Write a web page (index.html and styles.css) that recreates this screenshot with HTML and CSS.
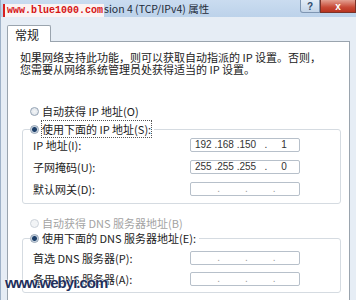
FILE: index.html
```html
<!DOCTYPE html>
<html lang="zh-CN">
<head>
    <meta charset="UTF-8">
    <title>Internet Protocol Version 4 (TCP/IPv4) 属性</title>
    <link rel="stylesheet" href="styles.css">
</head>
<body>

<div class="window">
    <div class="titlebar">
        <span class="title"><span class="mark">www.blue1000.com</span>sion 4 (TCP/IPv4) 属性</span>
        <div class="caption-btns">
            <span class="btn help">?</span>
            <span class="btn close">x</span>
        </div>
    </div>

    <div class="client">
        <div class="tabs"><span class="tab">常规</span></div>

        <div class="panel">
            <p class="intro">如果网络支持此功能，则可以获取自动指派的 IP 设置。否则，<br>您需要从网络系统管理员处获得适当的 IP 设置。</p>

            <div class="opt"><span class="radio"></span>自动获得 IP 地址(O)</div>

            <fieldset class="group ip">
                <legend class="opt"><span class="radio on"></span><span class="focus">使用下面的 IP 地址(S):</span></legend>
                <div class="row"><span class="lbl">IP 地址(I):</span><span class="ipbox">192 .168 .150   .     1</span></div>
                <div class="row"><span class="lbl">子网掩码(U):</span><span class="ipbox">255 .255 .255   .     0</span></div>
                <div class="row"><span class="lbl">默认网关(D):</span><span class="ipbox empty">        .         .         .</span></div>
            </fieldset>

            <div class="opt off"><span class="radio"></span>自动获得 DNS 服务器地址(B)</div>

            <fieldset class="group dns">
                <legend class="opt"><span class="radio on"></span>使用下面的 DNS 服务器地址(E):</legend>
                <div class="row"><span class="lbl">首选 DNS 服务器(P):</span><span class="ipbox empty">        .         .         .</span></div>
                <div class="row"><span class="lbl">备用 DNS 服务器(A):</span><span class="ipbox empty">        .         .         .</span></div>
            </fieldset>
        </div>
    </div>

    <!-- watermark stamped over the screenshot -->
    <div class="stamp">www.webyi.com</div>
</div>

</body>
</html>
```

FILE: styles.css
```css
body {
    margin: 0;
    padding: 0;
    font-family: "Noto Sans CJK SC", "Noto Sans", sans-serif;
    font-size: 11px;
    color: #222;
    background-color: #e6edf5;
}

.window {
    position: relative;
    width: 356px;
    height: 300px;
    overflow: hidden;
    border-left: 1px solid #9fb2c8;
    box-sizing: border-box;
}

.titlebar {
    display: flex;
    align-items: flex-start;
    height: 17px;
    background: linear-gradient(#cadcf0, #bcd2ea);
}

.title {
    margin-top: 2px;
    font-size: 10.5px;
    line-height: 13px;
    color: #1e2b3a;
}

.mark {
    display: inline-block;
    margin-left: 2px;
    padding: 0 1px 0 2px;
    background-color: #fbf3f3;
    border-left: 2px solid #d62020;
    color: #d61414;
    font-family: "Liberation Mono", monospace;
    font-size: 10px;
    font-weight: bold;
}

.caption-btns {
    display: flex;
    margin-left: auto;
}

.btn {
    display: flex;
    align-items: center;
    justify-content: center;
    height: 13px;
    font-family: "Liberation Sans", sans-serif;
    font-weight: bold;
    font-size: 10px;
    box-sizing: border-box;
}

.help {
    width: 20px;
    background: linear-gradient(#e4edf7, #c3d4e7);
    border: 1px solid #7f96b2;
    border-top: none;
    border-radius: 0 0 0 3px;
    color: #2f4a6b;
}

.close {
    width: 36px;
    background: linear-gradient(#e3a091, #c84a36 60%, #b8331f);
    border: 1px solid #7b3328;
    border-top: none;
    color: #fff;
}

.client {
    padding: 8px 6px 0 6px;
}

.tabs {
    display: flex;
    margin-bottom: -1px;
}

.tab {
    position: relative;
    width: 44px;
    height: 17px;
    padding-left: 7px;
    line-height: 17px;
    font-size: 12px;
    background-color: #fff;
    border: 1px solid #9aa4ae;
    border-bottom: none;
    border-radius: 2px 2px 0 0;
    box-sizing: border-box;
    z-index: 1;
}

.panel {
    height: 270px;
    padding-top: 9px;
    background-color: #fff;
    border: 1px solid #9aa4ae;
    box-sizing: border-box;
}

.intro {
    margin: 0 0 29px 12px;
    line-height: 12px;
    white-space: nowrap;
}

.opt {
    display: flex;
    align-items: center;
    height: 14px;
    margin-left: 22px;
    white-space: nowrap;
}

.radio {
    width: 9px;
    height: 9px;
    margin-right: 3px;
    border: 1px solid #94a3b4;
    border-radius: 50%;
    background: radial-gradient(#f4f6f8, #d9dfe6);
    box-sizing: border-box;
}

.radio.on {
    background: radial-gradient(#1d3f68 0 2px, #7a93b0 2.5px, #dfe5ec 3.2px);
}

.off {
    color: #a3a3a3;
    margin-top: 12px;
}

.off .radio {
    border-color: #cdd3da;
    background: #f2f4f6;
}

.focus {
    outline: 1px dotted #555;
    outline-offset: 0;
}

.group {
    margin: 4px 8px 0 14px;
    padding: 2px 0 7px 7px;
    border: 1px solid #d5dbe1;
    border-radius: 3px;
    box-shadow: inset 1px 1px 0 #fff;
}

.group legend {
    margin-left: 0;
    padding: 0 3px 0 0;
}

.group.dns {
    margin-top: 1px;
    padding-top: 6px;
    padding-bottom: 6px;
}

.row {
    display: flex;
    align-items: center;
    height: 14px;
    padding-left: 3px;
    white-space: nowrap;
}

.row + .row {
    margin-top: 8px;
}

.dns .row + .row {
    margin-top: 7px;
}

.lbl {
    width: 157px;
}

.ipbox {
    width: 110px;
    height: 14px;
    padding-left: 4px;
    font-family: "Liberation Sans", sans-serif;
    font-size: 10px;
    line-height: 12px;
    color: #333;
    white-space: pre;
    border: 1px solid #b7c0ca;
    border-radius: 2px;
    box-sizing: border-box;
}

.ipbox.empty {
    color: #9a9a9a;
}

.stamp {
    position: absolute;
    left: 4px;
    top: 274px;
    font-family: "Liberation Sans", sans-serif;
    font-size: 15px;
    font-weight: bold;
    letter-spacing: -1px;
    color: #22305c;
    text-shadow: 0 0 2px #fff, 0 0 2px #fff;
}
```
